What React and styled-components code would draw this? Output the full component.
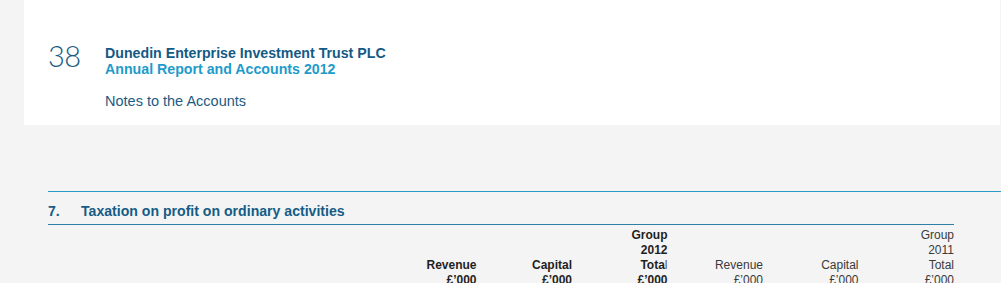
import React from "react";
import styled, { createGlobalStyle } from "styled-components";

const GlobalStyle = createGlobalStyle`
  html, body {
    margin: 0;
    padding: 0;
    background: #f4f4f4;
    font-family: "Liberation Sans", Arial, sans-serif;
  }
  * { box-sizing: border-box; }
`;

const Page = styled.div`
  width: 1001px;
  height: 283px;
  overflow: hidden;
  background: #f4f4f4;
`;

const Header = styled.header`
  margin-left: 24px;
  margin-right: 1px;
  height: 125px;
  background: #ffffff;
  display: flex;
  align-items: flex-start;
  padding: 41px 0 0 24px;
`;

const PageNumber = styled.div`
  width: 57px;
  font-family: "Lato", "Liberation Sans", sans-serif;
  font-weight: 300;
  font-size: 29px;
  line-height: 29px;
  color: #175b84;
  letter-spacing: -0.5px;
`;

const TitleBlock = styled.div`
  display: flex;
  flex-direction: column;
  padding-top: 4px;
`;

const TitleLine = styled.div`
  font-size: 14.2px;
  line-height: 16px;
  font-weight: 700;
  color: ${(p) => (p.$accent ? "#1d9bca" : "#145a85")};
`;

const Subtitle = styled.div`
  margin-top: 15px;
  font-size: 14.5px;
  line-height: 18px;
  color: #1d5b82;
`;

const Section = styled.section`
  margin-top: 66px;
  padding-left: 48px;
`;

const TopRule = styled.div`
  border-top: 1px solid #2b9bc3;
`;

const Content = styled.div`
  width: 906px;
`;

const Heading = styled.h2`
  margin: 0;
  display: flex;
  padding: 10px 0 4px;
  border-bottom: 1px solid #2f80a7;
  font-size: 14.1px;
  line-height: 18px;
  font-weight: 700;
  color: #155c86;
`;

const HeadingNumber = styled.span`
  width: 33px;
`;

const TableHead = styled.div`
  display: grid;
  grid-template-columns: 333px repeat(6, 95.5px);
  align-items: end;
  padding-top: 3px;
`;

const HeadCell = styled.div`
  text-align: right;
  font-size: 12px;
  line-height: 15px;
  font-weight: ${(p) => (p.$bold ? 700 : 400)};
  color: ${(p) => (p.$bold ? "#1f1f1f" : "#3a3a3a")};
`;

const Thin = styled.span`
  font-weight: 400;
  color: #555;
`;

const columns = [
  { bold: true, lines: ["Revenue", "£’000"] },
  { bold: true, lines: ["Capital", "£’000"] },
  { bold: true, lines: ["Group", "2012", <>Tota<Thin>l</Thin></>, "£’000"] },
  { bold: false, lines: ["Revenue", "£’000"] },
  { bold: false, lines: ["Capital", "£’000"] },
  { bold: false, lines: ["Group", "2011", "Total", "£’000"] },
];

export default function App() {
  return (
    <Page>
      <GlobalStyle />
      <Header>
        <PageNumber>38</PageNumber>
        <TitleBlock>
          <TitleLine>Dunedin Enterprise Investment Trust PLC</TitleLine>
          <TitleLine $accent>Annual Report and Accounts 2012</TitleLine>
          <Subtitle>Notes to the Accounts</Subtitle>
        </TitleBlock>
      </Header>
      <Section>
        <TopRule />
        <Content>
          <Heading>
            <HeadingNumber>7.</HeadingNumber>
            <span>Taxation on profit on ordinary activities</span>
          </Heading>
          <TableHead>
            <div />
            {columns.map((c, i) => (
              <HeadCell key={i} $bold={c.bold}>
                {c.lines.map((l, j) => (
                  <div key={j}>{l}</div>
                ))}
              </HeadCell>
            ))}
          </TableHead>
        </Content>
      </Section>
    </Page>
  );
}
